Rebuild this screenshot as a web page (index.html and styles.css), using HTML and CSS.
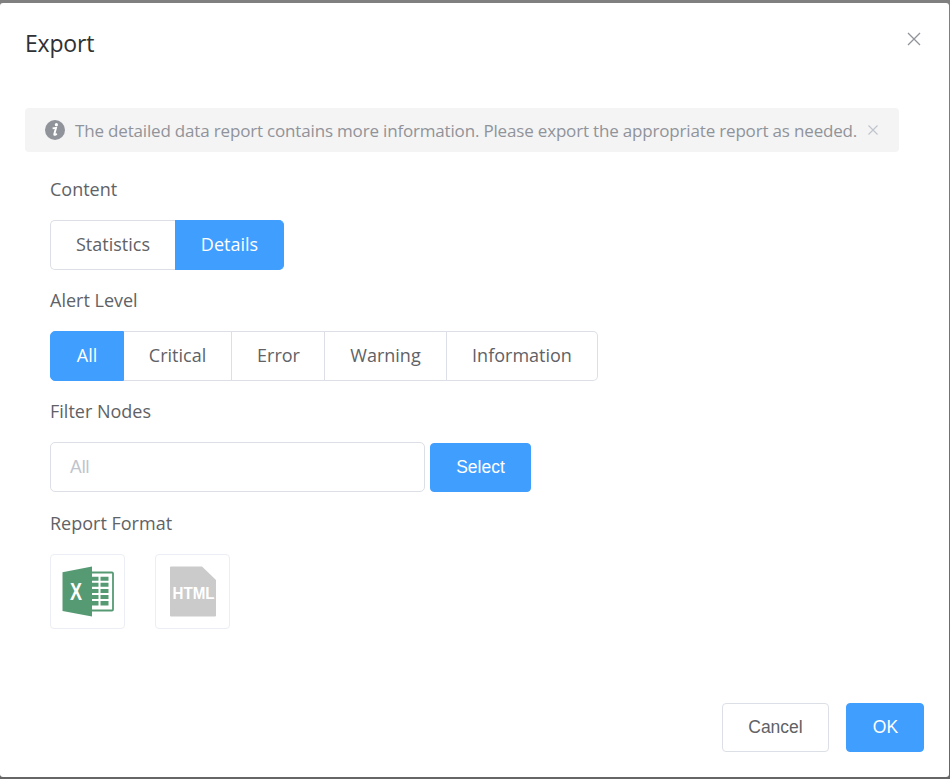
FILE: index.html
```html
<!DOCTYPE html>
<html lang="en">
<head>
<meta charset="utf-8">
<title>Export</title>
<link rel="stylesheet" href="styles.css">
</head>
<body>
<main class="dialog">
  <header class="header">
    <h1 class="title">Export</h1>
    <svg class="close" width="14" height="14" viewBox="0 0 14 14"><path d="M1 1L13 13M13 1L1 13"/></svg>
  </header>
  <div class="notice">
    <svg class="info" width="20" height="20" viewBox="0 0 20 20"><circle cx="10" cy="10" r="10" fill="#909399"/><circle cx="11.4" cy="4.700" r="1.600" fill="#fff"/><path d="M7.600 8.400L11 7.900L9.300 14.200Q9.200 15.800 11.800 13.800" fill="none" stroke="#fff" stroke-width="1.900"/></svg>
    <span class="notice-text">The detailed data report contains more information. Please export the appropriate report as needed.</span>
    <svg class="notice-close" width="10" height="10" viewBox="0 0 10 10"><path d="M.5 .5L9.5 9.5M9.5 .5L.5 9.5"/></svg>
  </div>
  <section class="form">
    <div class="label">Content</div>
    <div class="group">
      <div class="option statistics">Statistics</div>
      <div class="option details active">Details</div>
    </div>
    <div class="label">Alert Level</div>
    <div class="group">
      <div class="option all active">All</div>
      <div class="option critical">Critical</div>
      <div class="option error">Error</div>
      <div class="option warning">Warning</div>
      <div class="option information">Information</div>
    </div>
    <div class="label">Filter Nodes</div>
    <div class="filter">
      <div class="input">All</div>
      <div class="button primary select">Select</div>
    </div>
    <div class="label">Report Format</div>
    <div class="formats">
      <div class="format">
        <svg width="73" height="73" viewBox="0 0 73 73">
          <path d="M38 17.500H61Q62 17.500 62 18.500V54.500Q62 55.500 61 55.500H38" fill="#fff" stroke="#569a74" stroke-width="1.800"/>
          <path d="M11.500 17.300L41 11.500V61.500L11.500 56Z" fill="#569a74"/>
          <path d="M40 21.700H47.500V25.700H40ZM49.500 21.700H57.500V25.700H49.500ZM40 27.800H47.500V31.800H40ZM49.500 27.800H57.500V31.800H49.500ZM40 33.900H47.500V37.900H40ZM49.500 33.900H57.500V37.900H49.500ZM40 40H47.500V44H40ZM49.500 40H57.500V44H49.500ZM40 46.100H47.500V50.600H40ZM49.500 46.100H57.500V50.600H49.500Z" fill="#569a74"/>
          <text x="25" y="44.500" class="excel-mark" textLength="12" lengthAdjust="spacingAndGlyphs">X</text>
        </svg>
      </div>
      <div class="format">
        <svg width="73" height="73" viewBox="0 0 73 73">
          <path d="M15 11.500H46L60 25V60.500Q60 61.500 59 61.500H15Q14 61.500 14 60.500V12.500Q14 11.500 15 11.500Z" fill="#cbcbcb"/>
          <text x="37.500" y="43.500" class="html-mark" textLength="42" lengthAdjust="spacingAndGlyphs">HTML</text>
        </svg>
      </div>
    </div>
  </section>
  <footer class="footer">
    <div class="button cancel">Cancel</div>
    <div class="button primary ok">OK</div>
  </footer>
</main>
</body>
</html>
```
FILE: styles.css
```css
* { box-sizing: border-box; }
body { margin: 0; height: 779px; padding: 3px 1px 2px 0; background: linear-gradient(#808080, #666); overflow: hidden; font-family: "Open Sans", sans-serif; font-size: 18px; color: #606266; }
.dialog { height: 774px; background: #fff; border-radius: 3px; padding: 0 25px; display: flex; flex-direction: column; }
.header { height: 105px; display: flex; justify-content: space-between; align-items: flex-start; }
.title { margin: 24px 0 0; font-size: 23px; line-height: 32px; font-weight: 400; letter-spacing: -.2px; color: #303133; }
.close { margin: 29px 3px 0 0; fill: none; stroke: #909399; stroke-width: 1.3; }
.notice { width: 874px; height: 44px; flex: none; padding: 0 21px 0 20px; display: flex; align-items: center; background: #f4f4f5; border-radius: 4px; color: #909399; }
.info { margin: -1px 10px 0 0; flex: none; }
.notice-text { flex: 1; padding-top: 1px; white-space: nowrap; font-size: 17px; line-height: 24px; letter-spacing: -.175px; }
.notice-close { fill: none; stroke: #c0c4cc; stroke-width: 1.2; flex: none; }
.form { padding: 23px 0 0 25px; }
.label { height: 28px; line-height: 28px; margin-bottom: 17px; white-space: nowrap; }
.group { display: flex; height: 50px; margin-bottom: 16px; }
.option { display: flex; align-items: center; justify-content: center; border: 1px solid #dcdfe6; border-left: 0; padding-bottom: 3px; white-space: nowrap; }
.option:first-child { border-left: 1px solid #dcdfe6; border-radius: 5px 0 0 5px; }
.option:last-child { border-radius: 0 5px 5px 0; }
.option.active { background: #409eff; border-color: #409eff; color: #fff; }
.statistics { width: 125px; border-right: 0; }
.details { width: 109px; padding-left: 1px; }
.all { width: 74px; }
.critical { width: 108px; }
.error { width: 93px; padding-left: 1px; }
.warning { width: 122px; }
.information { width: 151px; }
.filter { display: flex; align-items: flex-end; gap: 5px; height: 50px; margin-bottom: 17px; }
.input { width: 375px; height: 50px; border: 1px solid #dcdfe6; border-radius: 5px; padding-left: 19px; line-height: 48px; color: #c0c4cc; font-family: "Liberation Sans", sans-serif; font-size: 17.5px; }
.button { height: 49px; border: 1px solid #dcdfe6; border-radius: 4px; display: flex; align-items: center; justify-content: center; font-family: "Liberation Sans", sans-serif; font-size: 17.5px; }
.primary { background: #409eff; border-color: #409eff; color: #fff; }
.select { width: 101px; }
.cancel { width: 107px; }
.ok { width: 78px; padding-left: 1px; }
.formats { display: flex; gap: 30px; }
.format { width: 75px; height: 75px; border: 1px solid #ebeef5; border-radius: 4px; }
.format svg { display: block; }
.excel-mark { font: 700 24px "Liberation Sans", sans-serif; fill: #fff; text-anchor: middle; }
.html-mark { font: 700 17px "Liberation Sans", sans-serif; fill: #fff; text-anchor: middle; }
.footer { display: flex; justify-content: flex-end; gap: 17px; margin-top: auto; padding-bottom: 25px; }
```
